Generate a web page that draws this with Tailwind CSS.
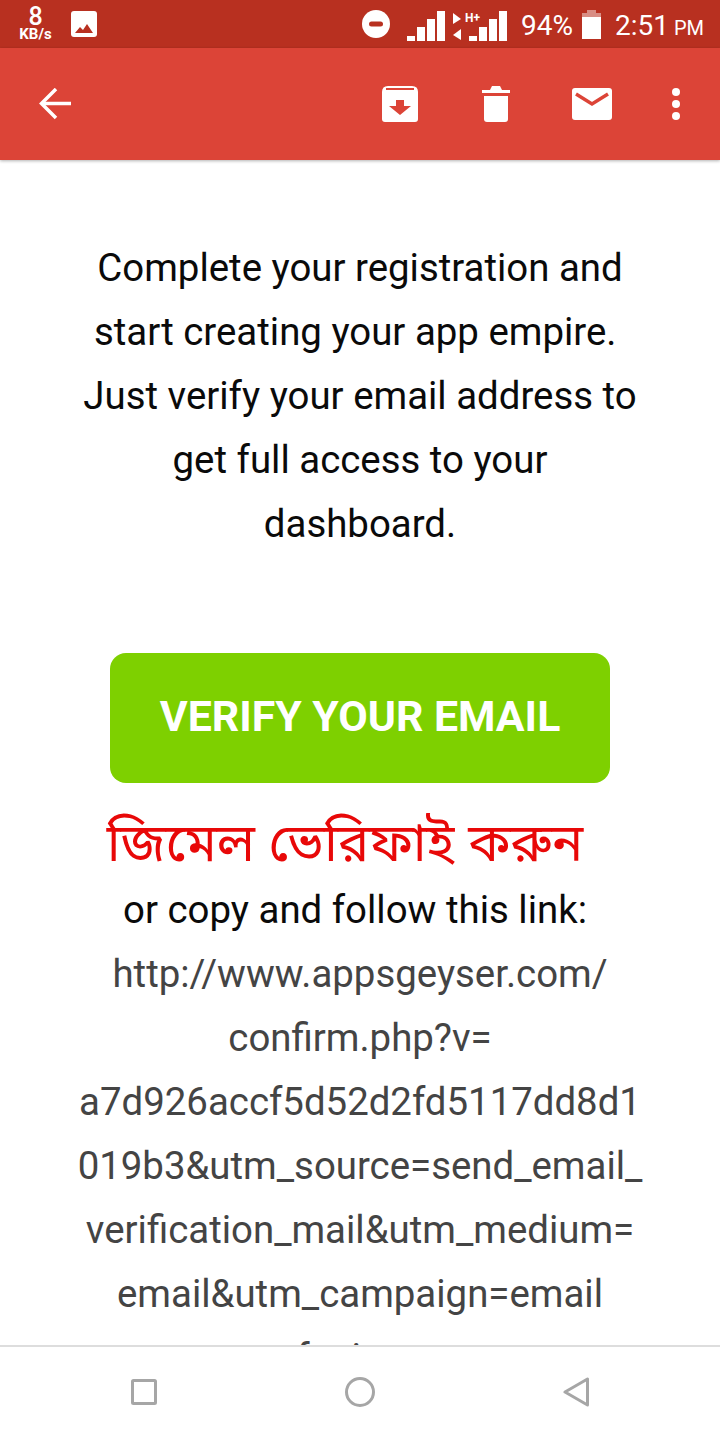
<!DOCTYPE html>
<html lang="en">
<head>
  <meta charset="UTF-8" />
  <script src="https://cdn.jsdelivr.net/npm/@tailwindcss/browser@4"></script>
  <title>Verify your email</title>
</head>
<body>
  <div class="w-[720px] h-[1440px] flex flex-col overflow-hidden bg-white font-['Roboto',sans-serif]">
    <!-- status bar -->
    <div class="h-12 shrink-0 bg-[#b83020] text-white flex items-center relative">
      <div class="w-[71px] flex flex-col items-center leading-none">
        <span class="text-[25px] font-medium leading-[20px]">8</span>
        <span class="text-[15px] font-bold leading-[14px]">KB/s</span>
      </div>
      <svg class="w-[26px] h-[26px]" viewBox="0 0 26 26">
        <rect width="26" height="26" rx="3" fill="#fff" />
        <path d="M4 22 L9 16 L12 19 L16 13 L22 22 Z" fill="#b83020" />
      </svg>
      <div class="ml-auto flex items-center mr-[16px]">
        <svg class="w-7 h-7 mr-[17px]" viewBox="0 0 28 28">
          <circle cx="14" cy="14" r="14" fill="#fff" />
          <rect x="7" y="11.500" width="14" height="5" rx="2.500" fill="#b83020" />
        </svg>
        <svg class="w-[100px] h-[30px] mt-[4px]" viewBox="0 0 100 30" fill="#fff">
          <rect x="0" y="25" width="8" height="5" />
          <rect x="10" y="16" width="8" height="14" />
          <rect x="20" y="8" width="8" height="22" />
          <rect x="30" y="0" width="8" height="30" />
          <path d="M46 2 L54 8 L46 13 Z" />
          <path d="M54 18 L54 29 L46 24 Z" />
          <text x="58" y="11" font-size="12" font-weight="700" fill="#fff">H+</text>
          <rect x="62" y="25" width="8" height="5" />
          <rect x="72" y="16" width="8" height="14" />
          <rect x="82" y="8" width="8" height="22" />
          <rect x="92" y="0" width="8" height="30" />
        </svg>
        <span class="text-[28px] leading-none ml-[14px] mt-[3px]">94%</span>
        <svg class="w-[19px] h-[29px] ml-[9px]" viewBox="0 0 19 29">
          <path d="M5 0 H14 V3 H19 V9 H0 V3 H5 Z" fill="#fff" fill-opacity="0.45" />
          <rect y="7" width="19" height="22" fill="#fff" />
        </svg>
        <span class="text-[28px] leading-none ml-[14px] mt-[3px]">2:51</span>
        <span class="text-[20px] leading-none ml-[5px] mt-[7px]">PM</span>
      </div>
    </div>

    <!-- toolbar -->
    <div class="h-[112px] shrink-0 bg-[#dc4437] shadow-[0_1px_3px_rgba(0,0,0,0.3)] flex items-start relative z-10 text-white">
      <svg class="w-8 h-8 ml-[39px] mt-[40px]" viewBox="0 0 32 32" fill="none" stroke="#fff" stroke-width="3.500">
        <path d="M32 15.500 H3" />
        <path d="M17 1 L2.500 15.500 L17 30" />
      </svg>
      <div class="ml-auto flex">
        <svg class="w-9 h-9 mt-[38px]" viewBox="0 0 36 36">
          <path d="M6 0 H30 Q36 0 36 6 V33 Q36 36 33 36 H3 Q0 36 0 33 V6 Q0 0 6 0 Z" fill="#fff" />
          <rect x="4" y="2" width="28" height="2" fill="#dc4437" />
          <path d="M14 14 H22 V20 H29 L18 29 L7 20 H14 Z" fill="#dc4437" />
        </svg>
        <svg class="w-7 h-9 ml-[64px] mt-[38px]" viewBox="0 0 28 36" fill="#fff">
          <path d="M0 4 H8 L10 0 H18 L20 4 H28 V7 H0 Z" />
          <path d="M2 10 H26 V33 Q26 36 23 36 H5 Q2 36 2 33 Z" />
        </svg>
        <svg class="w-10 h-8 ml-[62px] mt-[40px]" viewBox="0 0 40 32">
          <rect width="40" height="32" rx="3" fill="#fff" />
          <path d="M4 6 L20 16 L36 6" fill="none" stroke="#dc4437" stroke-width="3.500" />
        </svg>
        <svg class="w-2 h-8 ml-[60px] mr-[40px] mt-[40px]" viewBox="0 0 8 32" fill="#fff">
          <circle cx="4" cy="4" r="4" />
          <circle cx="4" cy="16" r="4" />
          <circle cx="4" cy="28" r="4" />
        </svg>
      </div>
    </div>

    <!-- mail body -->
    <div class="flex-1 min-h-0 overflow-hidden flex flex-col items-center text-center text-[38.4px] leading-[64px]">
      <p class="mt-[76px] text-[#0a0a0a] whitespace-nowrap">
        Complete your registration and<br>
        start creating your app empire.&nbsp;<br>
        Just verify your email address to<br>
        get full access to your<br>
        dashboard.
      </p>
      <a class="mt-[97px] w-[500px] h-[130px] shrink-0 rounded-2xl bg-[#7ed000] text-white text-[42.8px] font-bold flex items-center justify-center pb-[4px]">VERIFY YOUR EMAIL</a>
      <p class="mt-[33px] -mb-[2px] -ml-[30px] text-[#e80808] text-[52.3px] leading-[64px] whitespace-nowrap font-['Noto_Sans_Bengali','Noto_Sans','DejaVu_Sans',sans-serif]">জিমেল ভেরিফাই করুন</p>
      <p class="text-[#0a0a0a] -ml-[10px] whitespace-nowrap">or copy and follow this link:</p>
      <p class="text-[#444] whitespace-nowrap">
        http://www.appsgeyser.com/<br>
        confirm.php?v=<br>
        a7d926accf5d52d2fd5117dd8d1<br>
        019b3&amp;utm_source=send_email_<br>
        verification_mail&amp;utm_medium=<br>
        email&amp;utm_campaign=email<br>
        fanions
      </p>
    </div>

    <!-- nav bar -->
    <div class="h-[95px] shrink-0 bg-white border-t-2 border-[#ddd] relative z-10">
      <div class="flex items-start mt-[30px]">
        <svg class="w-[26px] h-[26px] ml-[131px] mt-[2px]" viewBox="0 0 26 26" fill="none" stroke="#a6a6a6" stroke-width="3">
          <rect x="1.500" y="1.500" width="23" height="23" rx="1" />
        </svg>
        <svg class="w-[30px] h-[30px] ml-[188px]" viewBox="0 0 30 30" fill="none" stroke="#a6a6a6" stroke-width="3">
          <circle cx="15" cy="15" r="13.500" />
        </svg>
        <svg class="w-[26px] h-[30px] ml-[188px]" viewBox="0 0 26 30" fill="none" stroke="#a6a6a6" stroke-width="3" stroke-linejoin="round">
          <path d="M24.500 2 V28 L2 15 Z" />
        </svg>
      </div>
    </div>
  </div>
</body>
</html>
